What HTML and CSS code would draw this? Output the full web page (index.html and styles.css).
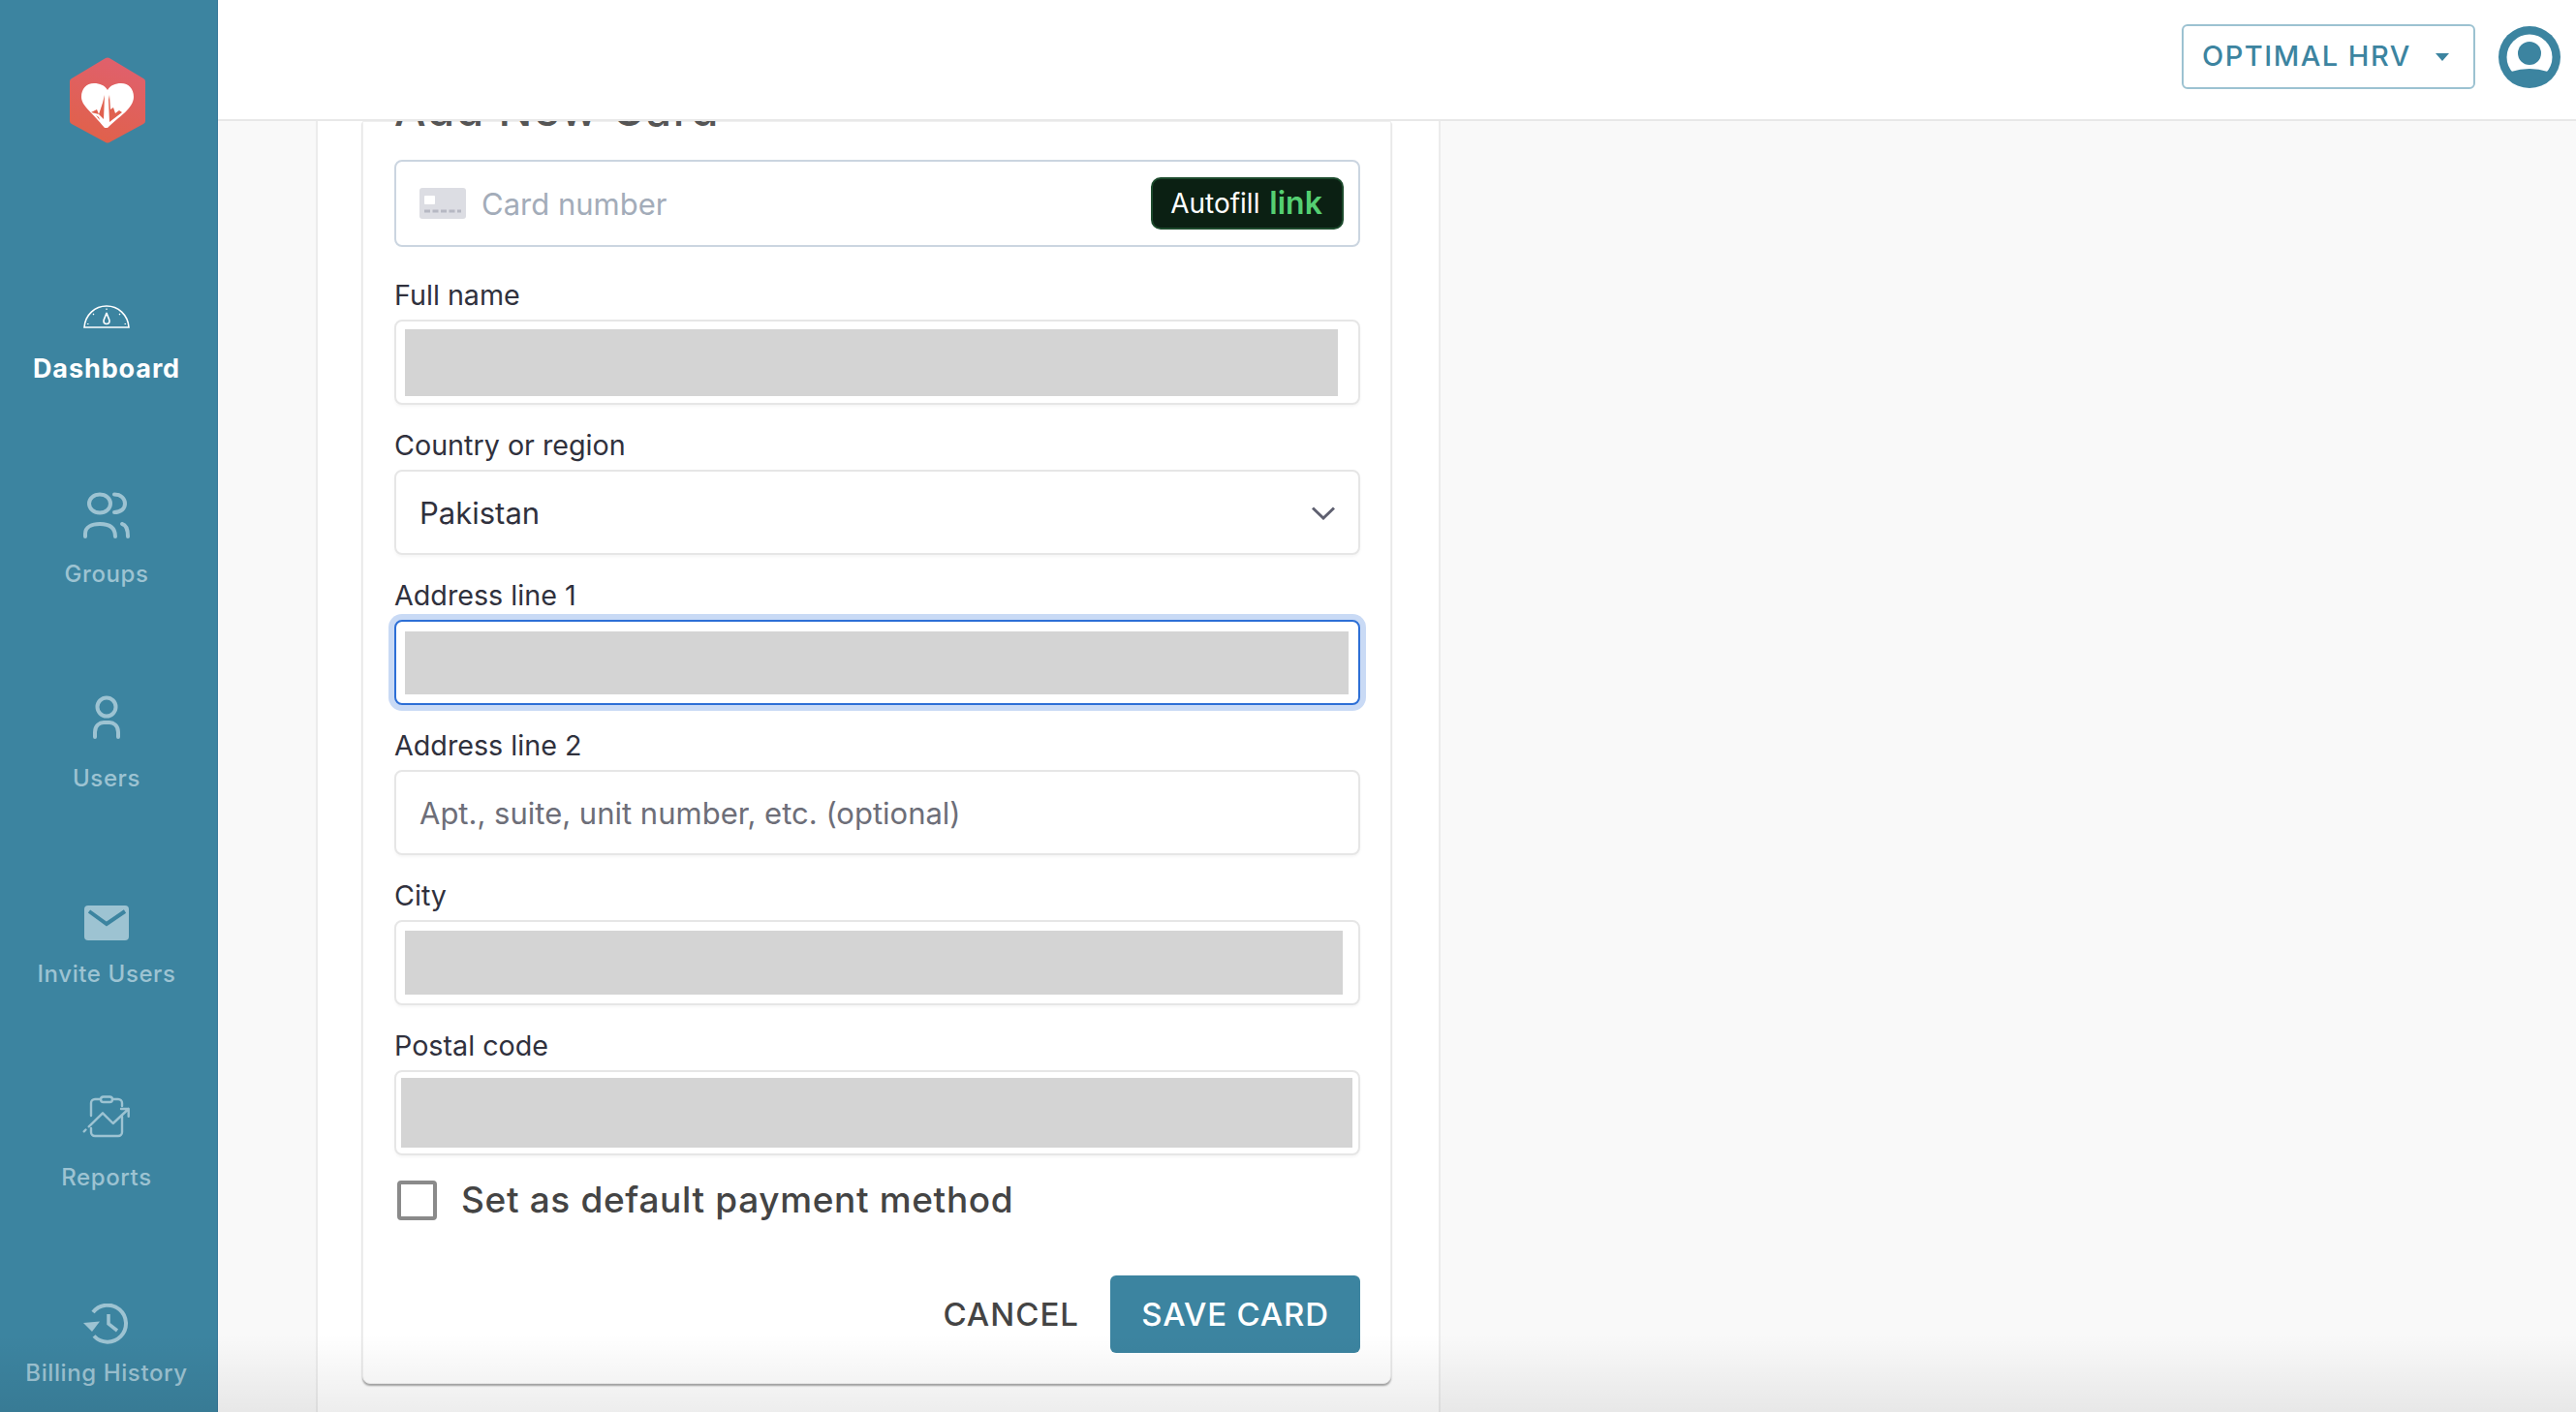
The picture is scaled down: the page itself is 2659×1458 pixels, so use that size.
FILE: index.html
```html
<!DOCTYPE html>
<html lang="en">
<head>
<meta charset="utf-8">
<title>Add New Card</title>
<link rel="stylesheet" href="styles.css">
</head>
<body>
<div class="app">
  <aside class="sidebar">
    <svg class="logo" width="78" height="89" viewBox="0 0 78 89">
      <defs><linearGradient id="hex" x1="0.7" y1="0" x2="0.35" y2="1"><stop offset="0" stop-color="#e0606e"/><stop offset="1" stop-color="#e0614a"/></linearGradient></defs>
      <path d="M37 1 Q39 0 41 1 L76 22 Q78 23 78 25 V66 Q78 68 76 69 L41 88 Q39 89 37 88 L2 69 Q0 68 0 66 V25 Q0 23 2 22 Z" fill="url(#hex)"/>
      <path d="M39 34 C36 29 31 27 25 27 C17 27 12 33 12 41 C12 50 22 56 36 73 L39 73 C50 62 66 53 66 41 C66 33 61 27 53 27 C47 27 42 29 39 34 Z" fill="#fff"/>
      <path d="M22 57 L28 54 L30 59 L34 47 L36 39 L35 64 L30 59 Z M30 62 L27 60 L31 65 Z M41 39 L42 54 L45 52 L47 58 L51 55 L54 57 L41 67 L40 44 Z" fill="#e0614f"/>
    </svg>
    <nav class="nav">
      <a class="nav-item nav-active nav-dash">
        <svg width="48" height="24" viewBox="0 0 48 24" fill="none" stroke="#fff"><path d="M1 23 C2 10 12 1 24 1 C36 1 46 10 47 23 Z" stroke-width="1.6"/><path d="M24 8 C25 12 27 14 27 16.5 A3 3 0 0 1 21 16.5 C21 14 23 12 24 8 Z" stroke-width="1.6"/><path d="M24 3.5 V5 M10 9 L11 10 M38 9 L37 10 M4 19.5 H5.5 M44 19.5 H42.5" stroke-width="1.2"/></svg>
        <span class="nav-label">Dashboard</span>
      </a>
      <a class="nav-item nav-groups">
        <svg width="48" height="48" viewBox="0 0 48 48" fill="none" stroke="#9dc3d2" stroke-width="4" stroke-linecap="round"><ellipse cx="17" cy="12" rx="11" ry="9.5"/><path d="M32 2.5 C39 2.500 43 7 43 12 C43 17 39 21 32 21"/><path d="M2 46 V43 C2 36 9 33 17 33 C26 33 33 36 33 46"/><path d="M40 33 C44 34 46 38 46 46"/></svg>
        <span class="nav-label">Groups</span>
      </a>
      <a class="nav-item nav-users">
        <svg width="32" height="46" viewBox="0 0 32 46" fill="none" stroke="#9dc3d2" stroke-width="4" stroke-linecap="round"><circle cx="16" cy="12" r="9.500"/><path d="M4 43 V38 C4 31 9 28 13 28 H19 C23 28 28 31 28 38 V43"/></svg>
        <span class="nav-label">Users</span>
      </a>
      <a class="nav-item nav-invite">
        <svg width="46" height="36" viewBox="0 0 46 36"><rect width="46" height="36" rx="4" fill="#9dc3d2"/><path d="M5 6 L23 19 L42 6" fill="none" stroke="#3c84a0" stroke-width="4"/></svg>
        <span class="nav-label">Invite Users</span>
      </a>
      <a class="nav-item nav-reports">
        <svg width="50" height="46" viewBox="0 0 50 46" fill="none" stroke="#9dc3d2" stroke-width="2.400" stroke-linecap="round" stroke-linejoin="round"><rect x="19" y="2.500" width="12" height="5.500" rx="2.700"/><path d="M19 5 H13 A4 4 0 0 0 9 9 V22"/><path d="M31 5 H37 A4 4 0 0 1 41 9 V12"/><path d="M9 35 V39 A4 4 0 0 0 13 43 H37 A4 4 0 0 0 41 39 V23"/><path d="M6.700 33.300 L21 19.300 L31.700 30 L47.700 15 M40 15 H47.700 V22.700"/><path d="M1.700 38.300 L3.500 36.500"/></svg>
        <span class="nav-label">Reports</span>
      </a>
      <a class="nav-item nav-billing">
        <svg width="48" height="42" viewBox="0 0 48 42" fill="none" stroke="#9dc3d2"><path d="M10 9 A19 19 0 1 1 11 33.500" stroke-width="4"/><path d="M0 20 L17 18.500 L9 29 Z" fill="#9dc3d2" stroke="none"/><path d="M26 11 V21 L35 28" stroke-width="3.500"/></svg>
        <span class="nav-label">Billing History</span>
      </a>
    </nav>
  </aside>
  <main class="main">
    <header class="topbar">
      <button class="org-button" type="button"><span>OPTIMAL HRV</span><span class="caret"></span></button>
      <svg class="avatar" width="64" height="64" viewBox="0 0 64 64"><circle cx="32" cy="32" r="32" fill="#3c84a0"/><circle cx="32" cy="32" r="23.500" fill="#fff"/><circle cx="32" cy="28" r="12" fill="#3c84a0"/><path d="M13 47 Q32 41 51 47 A24 24 0 0 1 13 47 Z" fill="#3c84a0"/></svg>
    </header>
    <div class="content">
      <section class="panel">
        <div class="card">
          <h2 class="card-title">Add New Card</h2>
          <div class="input input-card">
            <svg class="card-icon" width="48" height="32" viewBox="0 0 48 32"><rect width="48" height="32" rx="3" fill="#dcdde3"/><rect x="5" y="8" width="11" height="9" rx="1" fill="#fff"/><path d="M5 24 H43" stroke="#b6b8c3" stroke-width="3" stroke-dasharray="6 2.500"/></svg>
            <span class="card-placeholder">Card number</span>
            <span class="autofill">Autofill <b class="autofill-link">link</b></span>
          </div>
          <div class="field">
            <label class="field-label">Full name</label>
            <div class="input"><span class="redact redact-name"></span></div>
          </div>
          <div class="field">
            <label class="field-label">Country or region</label>
            <div class="input input-select"><span class="value">Pakistan</span>
              <svg class="chevron" width="24" height="14" viewBox="0 0 24 14" fill="none" stroke="#5f6070" stroke-width="3"><path d="M1 1.500 L12 12 L23 1.500"/></svg>
            </div>
          </div>
          <div class="field">
            <label class="field-label">Address line 1</label>
            <div class="input input-focus"><span class="redact redact-address"></span></div>
          </div>
          <div class="field">
            <label class="field-label">Address line 2</label>
            <div class="input input-text"><span class="placeholder">Apt., suite, unit number, etc. (optional)</span></div>
          </div>
          <div class="field">
            <label class="field-label">City</label>
            <div class="input"><span class="redact redact-city"></span></div>
          </div>
          <div class="field">
            <label class="field-label">Postal code</label>
            <div class="input input-postal"><span class="redact redact-postal"></span></div>
          </div>
          <label class="default-row"><span class="checkbox"></span><span class="default-text">Set as default payment method</span></label>
          <div class="actions">
            <button class="btn-cancel" type="button">CANCEL</button>
            <button class="btn-save" type="button">SAVE CARD</button>
          </div>
        </div>
      </section>
    </div>
  </main>
  <div class="bottom-fade"></div>
</div>
</body>
</html>
```
FILE: styles.css
```css
* { box-sizing: border-box; }
html, body { margin: 0; height: 100%; }
body { font-family: Inter, "Liberation Sans", sans-serif; color: #30313d; background: #f9f9f9; overflow: hidden; }
.app { position: relative; display: flex; height: 100vh; overflow: hidden; }

.sidebar { flex: 0 0 225px; background: #3c84a0; border-right: 1px solid #37789a; display: flex; flex-direction: column; align-items: center; padding: 59px 4px 0 0; }
.logo { flex: none; margin-left: 1px; }
.nav { display: flex; flex-direction: column; align-items: center; }
.nav-item { display: flex; flex-direction: column; align-items: center; color: #9dc3d2; }
.nav-label { display: block; font-size: 24px; line-height: 30px; font-weight: 500; letter-spacing: 0.6px; white-space: nowrap; }
.nav-active { color: #fff; }
.nav-active .nav-label { font-weight: 700; font-size: 27px; letter-spacing: 0.9px; }
.nav-dash { margin-top: 167px; gap: 27px; }
.nav-groups { margin-top: 112px; gap: 22px; }
.nav-users { margin-top: 110px; gap: 25px; }
.nav-invite { margin-top: 116px; gap: 20px; }
.nav-reports { margin-top: 109px; gap: 25px; }
.nav-billing { margin-top: 115px; gap: 15px; }

.main { flex: 1; min-width: 0; display: flex; flex-direction: column; }
.topbar { flex: 0 0 125px; background: #fff; border-bottom: 2px solid #e8e8e8; display: flex; align-items: flex-start; justify-content: flex-end; padding: 25px 16px 0 0; gap: 24px; position: relative; z-index: 2; }
.org-button { width: 303px; height: 67px; background: #fff; border: 2px solid #9cc2d1; border-radius: 6px; color: #3c84a0; font: 500 29px/1 Inter, sans-serif; letter-spacing: 1.5px; display: flex; align-items: center; justify-content: space-between; padding: 0 25px 2px 19px; }
.caret { width: 0; height: 0; border-left: 7.5px solid transparent; border-right: 7.5px solid transparent; border-top: 8px solid #3c84a0; margin-top: 2px; }
.avatar { flex: none; margin-top: 2px; }

.content { flex: 1; min-height: 0; overflow: hidden; padding-left: 101px; background: #f9f9f9; }
.panel { width: 1161px; height: 100%; background: #fff; border-left: 2px solid #ececec; border-right: 2px solid #ececec; padding-left: 46px; }
.card { width: 1062px; background: #fff; border: 1px solid #efefef; border-radius: 0 0 8px 8px; box-shadow: 0 2px 2px rgba(0, 0, 0, .35); padding: 0 31px 31px 32px; }
.card-title { margin: -33px 0 32px; height: 40px; font-size: 46px; line-height: 40px; font-weight: 500; color: #555; letter-spacing: 1.5px; white-space: nowrap; }

.input { height: 88px; background: #fff; border: 2px solid #e6e6e6; border-radius: 8px; box-shadow: 0 2px 3px rgba(0, 0, 0, .04); display: flex; align-items: center; padding-left: 9px; font-size: 31px; }
.input-card { height: 90px; border-color: #cbd5e0; box-shadow: none; padding: 0 15px 0 24px; }
.card-icon { flex: none; }
.card-placeholder { margin-left: 16px; color: #a3acb9; font-size: 31px; flex: 1; }
.autofill { width: 199px; height: 54px; margin-bottom: 1px; background: #0b2013; border: 2px solid #1c4a2c; border-radius: 10px; color: #fff; font-size: 28px; font-weight: 400; display: flex; align-items: center; justify-content: center; gap: 2px; padding-right: 2px; white-space: pre; }
.autofill-link { color: #55cf72; font-size: 32px; font-weight: 600; }

.field { margin-top: 20px; }
.input-card + .field { margin-top: 28px; }
.field-label { display: block; height: 47px; line-height: 44px; font-size: 28.700px; color: #30313d; }
.value { flex: 1; }
.input-select { padding: 0 24px 0 24px; }
.chevron { margin-top: 2px; }
.input-text { padding-left: 24px; }
.placeholder { color: #6d6e78; }
.input-focus { border-color: #2d6fd6; border-width: 2px; box-shadow: 0 0 0 6px #c9daf5; }
.redact { display: block; background: #d4d4d4; }
.redact-name { width: 963px; height: 69px; }
.redact-address { width: 974px; height: 65px; }
.redact-city { width: 968px; height: 66px; }
.redact-postal { width: 982px; height: 72px; }
.input-postal { padding-left: 5px; }

.default-row { display: flex; align-items: center; gap: 25px; margin: 26px 0 0 3px; height: 41px; }
.checkbox { flex: none; width: 41px; height: 41px; background: #fff; border: 4px solid #8a8a8a; border-radius: 4px; }
.default-text { font-size: 37px; font-weight: 500; color: #444; letter-spacing: 0.65px; white-space: nowrap; padding-bottom: 3px; }

.actions { display: flex; justify-content: flex-end; align-items: center; gap: 32px; margin-top: 57px; }
.btn-cancel { background: none; border: 0; padding: 0; color: #444; font: 500 33px/1 Inter, sans-serif; letter-spacing: 1px; }
.btn-save { width: 258px; height: 80px; background: #3c84a0; border: 0; border-radius: 6px; color: #fff; font: 500 33px/1 Inter, sans-serif; letter-spacing: 0.8px; }

.bottom-fade { position: absolute; left: 0; right: 0; bottom: 0; height: 80px; background: linear-gradient(rgba(0, 0, 0, 0), rgba(0, 0, 0, .07)); pointer-events: none; z-index: 3; }
```
